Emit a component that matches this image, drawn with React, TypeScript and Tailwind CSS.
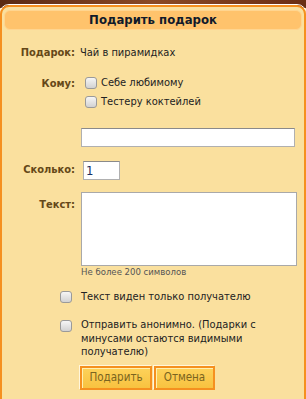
import React from "react";

const font = { fontFamily: '"DejaVu Sans Condensed", "DejaVu Sans", Verdana, sans-serif' };

function Check() {
  return (
    <span className="inline-block w-[12px] h-[12px] shrink-0 rounded-[3px] border border-[#9a9a9a] bg-gradient-to-b from-[#f6f6f6] to-[#d2d2d2]" />
  );
}

function Label({ children }: { children: React.ReactNode }) {
  return (
    <div className="w-[76px] shrink-0 text-right pr-[5px] font-bold text-[11px] text-[#654818]">
      {children}
    </div>
  );
}

function Btn({ children, w }: { children: React.ReactNode; w: string }) {
  return (
    <div className={`shadow-[-1px_-1px_0_#fff6dc] ${w}`}>
      <button
        className="w-full h-[24px] border-[2px] border-[#f5901f] bg-gradient-to-b from-[#fdd25a] to-[#f8c23f] shadow-[inset_1px_1px_0_#fff0b0] text-[11.5px] text-[#7a6420] flex items-center justify-center"
        style={font}
      >
        {children}
      </button>
    </div>
  );
}

export default function App() {
  return (
    <div className="w-[306px] h-[399px] overflow-hidden bg-[#fae09e] relative" style={font}>
      <div className="h-[8px] bg-gradient-to-r from-[#5a2a12] via-[#8a4a26] to-[#6a2e14]" />
      <div className="absolute left-[-1px] right-[-1px] top-[4px] bottom-[-20px] rounded-[10px] border border-white">
        <div className="h-full rounded-[9px] border-[2px] border-[#f5901f] bg-[#fae09e] pt-[3px] px-[2px]">
          <div className="h-[20px] rounded-[6px] border border-[#ffd590] bg-[#ffc36c] flex items-center justify-center font-bold text-[13px] text-[#111a2a]">
            Подарить подарок
          </div>
          <div className="text-[11px] text-[#222]">
            <div className="flex items-center mt-[16px] h-[14px]">
              <Label>Подарок:</Label>
              <div>Чай в пирамидках</div>
            </div>
            <div className="flex mt-[16px]">
              <Label><div className="leading-[14px] mt-[1px]">Кому:</div></Label>
              <div className="flex flex-col gap-[5px] pl-[5px]">
                <div className="flex items-center gap-[4px] h-[14px]"><Check /><span>Себе любимому</span></div>
                <div className="flex items-center gap-[4px] h-[14px]"><Check /><span>Тестеру коктейлей</span></div>
              </div>
            </div>
            <div className="flex mt-[19px]">
              <div className="w-[77px] shrink-0" />
              <div className="w-[214px] h-[19px] bg-white border border-[#b0b0b0] border-t-[#8a8a8a]" />
            </div>
            <div className="flex items-center mt-[14px]">
              <Label>Сколько:</Label>
              <div className="ml-[3px] w-[37px] h-[19px] bg-white border border-[#b0b0b0] border-t-[#8a8a8a] flex items-center pl-[2px] text-[13px] text-[#1a3060]">1</div>
            </div>
            <div className="flex mt-[12px]">
              <Label><div className="mt-[5px]">Текст:</div></Label>
              <div className="flex flex-col ml-[1px]">
                <div className="w-[216px] h-[74px] bg-white border border-[#a9a9a9]" />
                <div className="text-[9.5px] text-[#555] leading-[12px]">Не более 200 символов</div>
              </div>
            </div>
            <div className="flex items-center mt-[12px] h-[14px] pl-[56px] gap-[9px]">
              <Check />
              <span>Текст виден только получателю</span>
            </div>
            <div className="flex items-start mt-[14px] pl-[56px] gap-[9px]">
              <div className="mt-[2px]"><Check /></div>
              <span className="leading-[13.5px] w-[200px]">Отправить анонимно. (Подарки с минусами остаются видимыми получателю)</span>
            </div>
            <div className="flex mt-[7px] pl-[76px] gap-[2px]">
              <Btn w="w-[72px]">Подарить</Btn>
              <Btn w="w-[61px]">Отмена</Btn>
            </div>
          </div>
        </div>
      </div>
    </div>
  );
}
